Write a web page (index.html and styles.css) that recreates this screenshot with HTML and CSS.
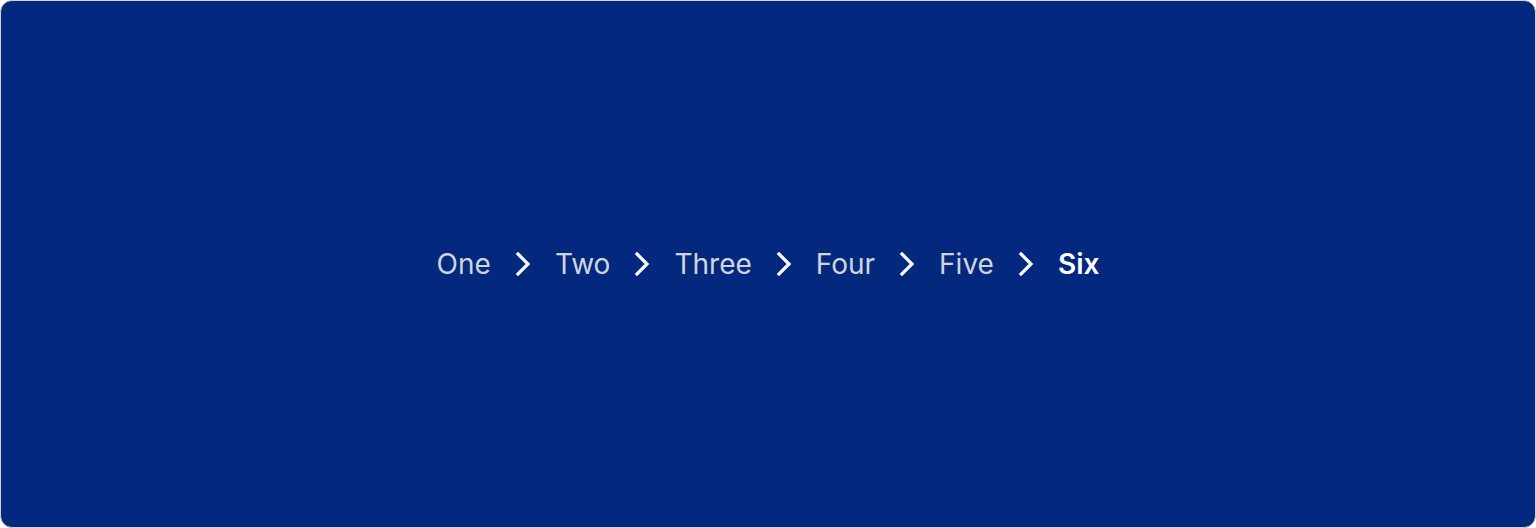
FILE: index.html
```html
<!DOCTYPE html>
<html lang="en">
<head>
<meta charset="utf-8">
<title>Breadcrumb</title>
<link rel="stylesheet" href="styles.css">
</head>
<body>
<main class="frame">
  <nav class="breadcrumb" aria-label="Breadcrumb">
    <ol class="crumbs">
      <li class="crumb"><a href="#">One</a></li>
      <li class="sep" aria-hidden="true"><svg viewBox="0 0 16 24" width="16" height="24"><polyline points="3,2 13,12 3,22" /></svg></li>
      <li class="crumb"><a href="#">Two</a></li>
      <li class="sep" aria-hidden="true"><svg viewBox="0 0 16 24" width="16" height="24"><polyline points="3,2 13,12 3,22" /></svg></li>
      <li class="crumb"><a href="#">Three</a></li>
      <li class="sep" aria-hidden="true"><svg viewBox="0 0 16 24" width="16" height="24"><polyline points="3,2 13,12 3,22" /></svg></li>
      <li class="crumb"><a href="#">Four</a></li>
      <li class="sep" aria-hidden="true"><svg viewBox="0 0 16 24" width="16" height="24"><polyline points="3,2 13,12 3,22" /></svg></li>
      <li class="crumb"><a href="#">Five</a></li>
      <li class="sep" aria-hidden="true"><svg viewBox="0 0 16 24" width="16" height="24"><polyline points="3,2 13,12 3,22" /></svg></li>
      <li class="crumb current" aria-current="page">Six</li>
    </ol>
  </nav>
</main>
</body>
</html>
```

FILE: styles.css
```css
* {
  box-sizing: border-box;
}

html, body {
  margin: 0;
  height: 100%;
}

body {
  font-family: Inter, "Noto Sans", sans-serif;
  background: #ffffff;
}

.frame {
  height: 528px;
  border: 1px solid #d0d5dd;
  border-radius: 12px;
  background: #03287d;
  display: flex;
  align-items: center;
  justify-content: center;
}

.crumbs {
  list-style: none;
  margin: 0;
  padding: 0;
  display: flex;
  align-items: center;
  gap: 24px;
}

.crumb {
  font-size: 28px;
  line-height: 36px;
  color: #d0d5dd;
}

.crumb a {
  color: inherit;
  text-decoration: none;
}

.crumb.current {
  color: #ffffff;
  font-weight: 600;
}

.sep {
  display: flex;
  align-items: center;
}

.sep svg {
  display: block;
  fill: none;
  stroke: #ffffff;
  stroke-width: 3.2;
  stroke-linecap: square;
  stroke-linejoin: miter;
}
```
